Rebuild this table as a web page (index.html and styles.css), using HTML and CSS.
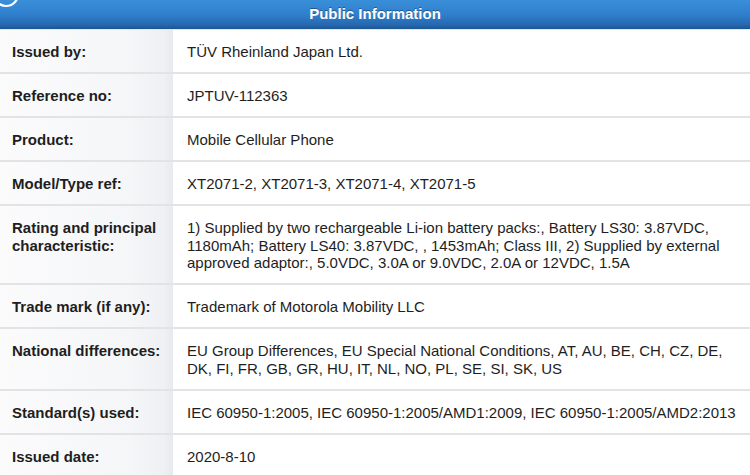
FILE: index.html
```html
<!DOCTYPE html>
<html>
<head>
<meta charset="utf-8">
<link rel="stylesheet" href="styles.css">
</head>
<body>
<div class="panel">
  <svg class="corner-icon" width="30" height="30" viewBox="0 0 30 30"><circle cx="6" cy="-6" r="12" fill="none" stroke="#ffffff" stroke-width="2.2"/></svg>
  <div class="header">Public Information</div>
  <div class="rows">
    <div class="row"><div class="label">Issued by:</div><div class="value">TÜV Rheinland Japan Ltd.</div></div>
    <div class="row"><div class="label">Reference no:</div><div class="value">JPTUV-112363</div></div>
    <div class="row"><div class="label">Product:</div><div class="value">Mobile Cellular Phone</div></div>
    <div class="row"><div class="label">Model/Type ref:</div><div class="value">XT2071-2, XT2071-3, XT2071-4, XT2071-5</div></div>
    <div class="row"><div class="label">Rating and principal characteristic:</div><div class="value">1) Supplied by two rechargeable Li-ion battery packs:, Battery LS30: 3.87VDC, 1180mAh; Battery LS40: 3.87VDC, , 1453mAh; Class III, 2) Supplied by external approved adaptor:, 5.0VDC, 3.0A or 9.0VDC, 2.0A or 12VDC, 1.5A</div></div>
    <div class="row"><div class="label">Trade mark (if any):</div><div class="value">Trademark of Motorola Mobility LLC</div></div>
    <div class="row"><div class="label">National differences:</div><div class="value">EU Group Differences, EU Special National Conditions, AT, AU, BE, CH, CZ, DE, DK, FI, FR, GB, GR, HU, IT, NL, NO, PL, SE, SI, SK, US</div></div>
    <div class="row"><div class="label">Standard(s) used:</div><div class="value">IEC 60950-1:2005, IEC 60950-1:2005/AMD1:2009, IEC 60950-1:2005/AMD2:2013</div></div>
    <div class="row"><div class="label">Issued date:</div><div class="value">2020-8-10</div></div>
  </div>
</div>
</body>
</html>
```
FILE: styles.css
```css
html, body {
  margin: 0;
  padding: 0;
  background: #ffffff;
}
body {
  font-family: "Liberation Sans", Arial, sans-serif;
  font-size: 15px;
  color: #1e1e1e;
  overflow: hidden;
}
.panel {
  position: relative;
  width: 750px;
}
.corner-icon {
  position: absolute;
  left: 0;
  top: 0;
}
.header {
  height: 29px;
  line-height: 27px;
  font-size: 15px;
  text-align: center;
  font-weight: bold;
  color: #ffffff;
  text-shadow: 0 -1px 0 rgba(0, 0, 0, 0.35);
  background: linear-gradient(to bottom, #3a8fd9 0%, #2f7fcc 50%, #2669b0 85%, #1c558f 100%);
  border-bottom: 1px solid #dfe7ef;
}
.row {
  display: grid;
  grid-template-columns: 173px 1fr;
  border-bottom: 2px solid #e3e3e3;
}
.label {
  font-weight: bold;
  padding: 13px 6px 11.5px 12px;
  line-height: 17.5px;
  background: linear-gradient(to right, #fbfbfc 0%, #f5f6f8 75%, #eef0f3 95%, #e7e9ee 100%);
}
.value {
  padding: 13px 10px 11.5px 14px;
  line-height: 17.5px;
}
```
